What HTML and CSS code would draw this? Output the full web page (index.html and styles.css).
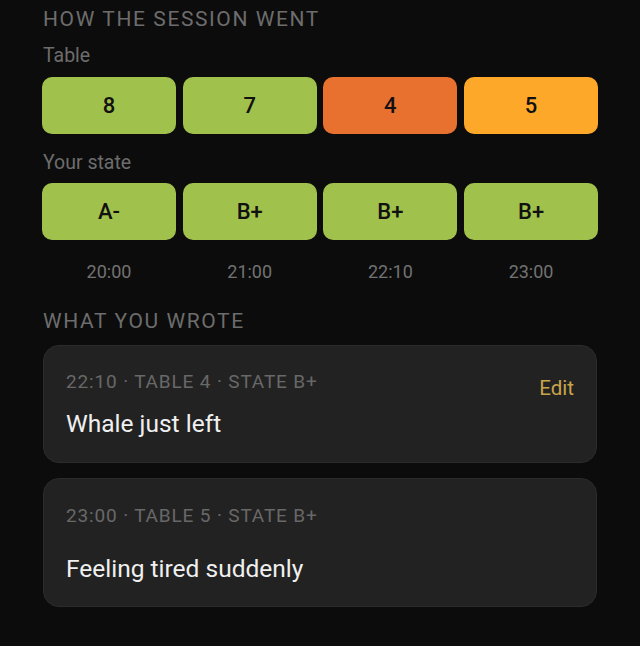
FILE: index.html
```html
<!DOCTYPE html>
<html>
<head>
<meta charset="utf-8">
<link rel="stylesheet" href="styles.css">
</head>
<body>
<main class="page">
  <h2 class="section">HOW THE SESSION WENT</h2>
  <div class="label">Table</div>
  <div class="row">
    <div class="chip green">8</div>
    <div class="chip green">7</div>
    <div class="chip red">4</div>
    <div class="chip amber">5</div>
  </div>
  <div class="label label2">Your state</div>
  <div class="row">
    <div class="chip green">A-</div>
    <div class="chip green">B+</div>
    <div class="chip green">B+</div>
    <div class="chip green">B+</div>
  </div>
  <div class="row times">
    <div>20:00</div>
    <div>21:00</div>
    <div>22:10</div>
    <div>23:00</div>
  </div>
  <h2 class="section section2">WHAT YOU WROTE</h2>
  <div class="card card1">
    <div class="card-head">
      <div class="meta">22:10 · TABLE 4 · STATE B+</div>
      <div class="edit">Edit</div>
    </div>
    <div class="note">Whale just left</div>
  </div>
  <div class="card card2">
    <div class="meta">23:00 · TABLE 5 · STATE B+</div>
    <div class="note note2">Feeling tired suddenly</div>
  </div>
</main>
</body>
</html>
```

FILE: styles.css
```css
html, body {
  margin: 0;
  padding: 0;
  background: #0c0c0c;
}
body {
  font-family: Roboto, "Liberation Sans", sans-serif;
  width: 640px;
  height: 646px;
  overflow: hidden;
}
.page {
  padding: 5px 43px 0 43px;
  box-sizing: border-box;
  width: 640px;
}
.section {
  margin: 0;
  font-weight: 400;
  font-size: 21px;
  letter-spacing: 1.6px;
  color: #6d6d6d;
  line-height: 28px;
}
.section2 {
  margin-top: 24px;
}
.label {
  font-size: 19.5px;
  color: #6d6d6d;
  line-height: 24px;
  margin-top: 11px;
  margin-bottom: 9px;
}
.label2 {
  margin-top: 17px;
  margin-bottom: 8px;
}
.row {
  display: grid;
  grid-template-columns: repeat(4, 134px);
  column-gap: 6.7px;
  margin-left: -1px;
}
.chip {
  height: 57px;
  border-radius: 10px;
  display: flex;
  align-items: center;
  justify-content: center;
  font-size: 22px;
  font-weight: 500;
  color: #111;
}
.green { background: #a0c14b; }
.red { background: #e8712f; }
.amber { background: #fea82a; }
.times {
  margin-top: 21px;
  font-size: 18px;
  color: #727272;
  text-align: center;
  line-height: 22px;
}
.card {
  background: #222222;
  border: 1px solid #2c2c2c;
  border-radius: 16px;
  width: 554px;
  box-sizing: border-box;
  padding: 0 22px;
}
.card1 {
  margin-top: 10px;
  height: 118px;
  padding-top: 24px;
}
.card2 {
  margin-top: 15px;
  height: 129px;
  padding-top: 25px;
}
.card-head {
  display: flex;
  justify-content: space-between;
  align-items: flex-start;
  height: 24px;
}
.meta {
  font-size: 19px;
  color: #686868;
  letter-spacing: 0.85px;
  line-height: 24px;
}
.edit {
  font-size: 20.5px;
  color: #c9a54a;
  line-height: 24px;
  margin-top: 6px;
}
.note {
  font-size: 24.5px;
  color: #f0f0f0;
  line-height: 30px;
  margin-top: 15px;
}
.note2 {
  margin-top: 26px;
}
```
